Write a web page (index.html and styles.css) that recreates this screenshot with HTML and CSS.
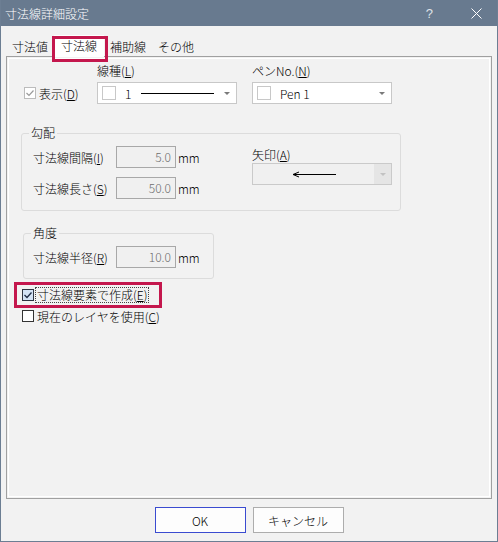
FILE: index.html
```html
<!doctype html>
<html>

<head>
    <meta charset="utf-8">
    <link rel="stylesheet" href="styles.css">
</head>

<body>
    <div class="window">
        <div class="titlebar">
            <span class="title">寸法線詳細設定</span>
            <span class="help">?</span>
            <svg class="close" width="11" height="11" viewBox="0 0 11 11">
                <path d="M0.5 0.5L10.5 10.5M10.5 0.5L0.5 10.5" stroke="#fff" stroke-width="1" fill="none" />
            </svg>
        </div>
        <div class="client">
            <div class="tabs">
                <span class="tab">寸法値</span>
                <span class="tab active">寸法線</span>
                <span class="tab">補助線</span>
                <span class="tab">その他</span>
            </div>
            <div class="panel">
                <div class="top-row">
                    <div class="check show">
                        <span class="box disabled">
                            <svg width="10" height="10" viewBox="0 0 10 10">
                                <path d="M1.5 5L4 7.5L8.5 2.5" fill="none" stroke="#9a9a9a" stroke-width="1.2" />
                            </svg>
                        </span>
                        <span>表示(<u>D</u>)</span>
                    </div>
                    <div class="field line-field">
                        <div class="caption">線種(<u>L</u>)</div>
                        <div class="combo">
                            <span class="swatch"></span>
                            <span class="combo-text">1</span>
                            <span class="line-sample"></span>
                            <span class="drop"></span>
                        </div>
                    </div>
                    <div class="field pen-field">
                        <div class="caption">ペンNo.(<u>N</u>)</div>
                        <div class="combo">
                            <span class="swatch"></span>
                            <span class="combo-text">Pen 1</span>
                            <span class="drop"></span>
                        </div>
                    </div>
                </div>

                <fieldset class="group slope">
                    <legend>勾配</legend>
                    <div class="group-body">
                        <div class="rows">
                            <div class="num-row">
                                <span class="num-label">寸法線間隔(<u>I</u>)</span>
                                <span class="num">5.0</span>
                                <span class="unit">mm</span>
                            </div>
                            <div class="num-row">
                                <span class="num-label">寸法線長さ(<u>S</u>)</span>
                                <span class="num">50.0</span>
                                <span class="unit">mm</span>
                            </div>
                        </div>
                        <div class="field arrow-field">
                            <div class="caption">矢印(<u>A</u>)</div>
                            <div class="combo disabled">
                                <svg class="arrow-sample" width="44" height="7" viewBox="0 0 44 7">
                                    <path d="M1 3.5H44M1 3.5L7 1M1 3.5L7 6" stroke="#000" stroke-width="1" fill="none" />
                                </svg>
                                <span class="arrow-btn"><span class="drop pale"></span></span>
                            </div>
                        </div>
                    </div>
                </fieldset>

                <fieldset class="group angle">
                    <legend>角度</legend>
                    <div class="group-body">
                        <div class="num-row">
                            <span class="num-label">寸法線半径(<u>R</u>)</span>
                            <span class="num">10.0</span>
                            <span class="unit">mm</span>
                        </div>
                    </div>
                </fieldset>

                <div class="highlight">
                    <span class="box checked">
                        <svg width="10" height="10" viewBox="0 0 10 10">
                            <path d="M1.5 5L4 7.5L8.5 2.5" fill="none" stroke="#1e2b44" stroke-width="1.3" />
                        </svg>
                    </span>
                    <span class="focus-text">寸法線要素で作成(<u>E</u>)</span>
                </div>

                <div class="check plain">
                    <span class="box"></span>
                    <span>現在のレイヤを使用(<u>C</u>)</span>
                </div>
            </div>
            <div class="buttons">
                <button class="btn default" type="button">OK</button>
                <button class="btn" type="button">キャンセル</button>
            </div>
        </div>
    </div>
</body>

</html>
```

FILE: styles.css
```css
body,
html {
    margin: 0;
    padding: 0;
    font-family: "Noto Sans CJK JP", "Noto Sans", sans-serif;
    font-size: 12px;
    font-weight: 300;
    color: #000;
}

.window {
    width: 498px;
    height: 542px;
    box-sizing: border-box;
    border: 1px solid #6c7e93;
    border-top: none;
    background-color: #f2f2f2;
}

.titlebar {
    height: 26px;
    background-color: #687a8f;
    color: white;
    display: flex;
    align-items: center;
    padding: 0 15px 0 4px;
}

.title {
    flex: 1;
}

.help {
    font-family: "Liberation Sans", sans-serif;
    font-size: 13px;
    color: #dfe3e8;
    margin-right: 38px;
}

.client {
    height: 515px;
}

.tabs {
    display: flex;
    align-items: flex-end;
    height: 19px;
    margin: 11px 0 0 5px;
}

.tab {
    width: 48px;
    height: 19px;
    line-height: 19px;
    text-align: center;
}

.tab.active {
    width: 50px;
    height: 22px;
    line-height: 22px;
    margin-bottom: -1px;
    background-color: white;
    position: relative;
    z-index: 1;
}

/* annotation frame */
.tab.active::after {
    content: "";
    position: absolute;
    left: -2px;
    top: 1px;
    width: 56px;
    height: 26px;
    box-sizing: border-box;
    border: 3px solid #c4174d;
}

.panel {
    margin: 0 5px;
    height: 443px;
    box-sizing: border-box;
    border: 1px solid #a0a0a0;
    box-shadow: inset 0 0 0 1px #f2f2f2, inset 0 0 0 2px #fff;
    padding-top: 7px;
}

.top-row {
    display: flex;
    align-items: flex-end;
}

.check {
    display: flex;
    align-items: center;
}

.box {
    width: 12px;
    height: 12px;
    box-sizing: border-box;
    border: 1px solid #333;
    background-color: white;
    margin-right: 3px;
    display: flex;
    align-items: center;
    justify-content: center;
}

.box.disabled {
    border-color: #bcbcbc;
}

.box.checked {
    background-color: #d3e2f4;
    border-color: #2e3440;
    margin-right: 1px;
}

.show {
    margin-left: 17px;
    width: 73px;
    height: 22px;
}

.line-field {
    width: 140px;
}

.pen-field {
    width: 140px;
    margin-left: 15px;
}

.caption {
    line-height: 14px;
    margin-bottom: 4px;
}

.combo {
    height: 22px;
    box-sizing: border-box;
    border: 1px solid #c8c8c8;
    background-color: white;
    display: flex;
    align-items: center;
}

.swatch {
    width: 14px;
    height: 14px;
    box-sizing: border-box;
    border: 1px solid #c8c8c8;
    margin-left: 4px;
}

.combo-text {
    margin-left: 9px;
}

.line-sample {
    width: 73px;
    height: 1px;
    background-color: #000;
    margin-left: 10px;
}

.drop {
    margin-left: auto;
    margin-right: 6px;
    width: 0;
    height: 0;
    border-left: 3px solid transparent;
    border-right: 3px solid transparent;
    border-top: 3px solid #7a7a7a;
}

.drop.pale {
    margin: 0;
    border-top-color: #c2c2c2;
}

.group {
    margin: 22px 0 0 14px;
    padding: 0;
    min-width: 0;
    width: 380px;
    box-sizing: border-box;
    border: 1px solid #dcdcdc;
    border-radius: 3px;
}

.group legend {
    margin-left: 7px;
    padding: 0 2px;
    line-height: 14px;
}

.group-body {
    display: flex;
    align-items: flex-start;
    padding: 6px 0 11px 11px;
}

.rows {
    width: 219px;
    display: flex;
    flex-direction: column;
    gap: 9px;
}

.num-row {
    display: flex;
    align-items: center;
    height: 22px;
}

.num-label {
    width: 83px;
}

.num {
    width: 60px;
    height: 22px;
    box-sizing: border-box;
    border: 1px solid #a8a8a8;
    background-color: #f0f0f0;
    color: #6d6d6d;
    text-align: right;
    padding-right: 4px;
    line-height: 20px;
}

.unit {
    margin-left: 2px;
}

.arrow-field {
    width: 140px;
    padding-top: 2px;
}

.arrow-field .caption {
    margin-bottom: 1px;
}

.combo.disabled {
    background-color: #f0f0f0;
    border-color: #cacaca;
}

.arrow-sample {
    margin-left: 39px;
}

.arrow-btn {
    margin-left: auto;
    width: 17px;
    height: 20px;
    background-color: #e5e5e5;
    display: flex;
    align-items: center;
    justify-content: center;
}

.group.angle {
    width: 191px;
    margin: 15px 0 0 16px;
}

.angle .group-body {
    padding: 6px 0 10px 9px;
}

.highlight {
    margin: 3px 0 0 7px;
    width: 148px;
    height: 26px;
    box-sizing: border-box;
    border: 3px solid #c4174d;
    display: flex;
    align-items: center;
    padding-left: 5px;
}

.focus-text {
    border: 1px dotted #444;
    padding: 0 1px;
    line-height: 14px;
}

.plain {
    margin-left: 15px;
    height: 16px;
}

.buttons {
    display: flex;
    justify-content: center;
    gap: 7px;
    margin-top: 8px;
}

.btn {
    width: 91px;
    height: 26px;
    box-sizing: border-box;
    border: 1px solid #adadad;
    background-color: #fdfdfd;
    font: inherit;
    color: #000;
    padding: 0;
}

.btn.default {
    border-color: #3a4bd0;
}
```
